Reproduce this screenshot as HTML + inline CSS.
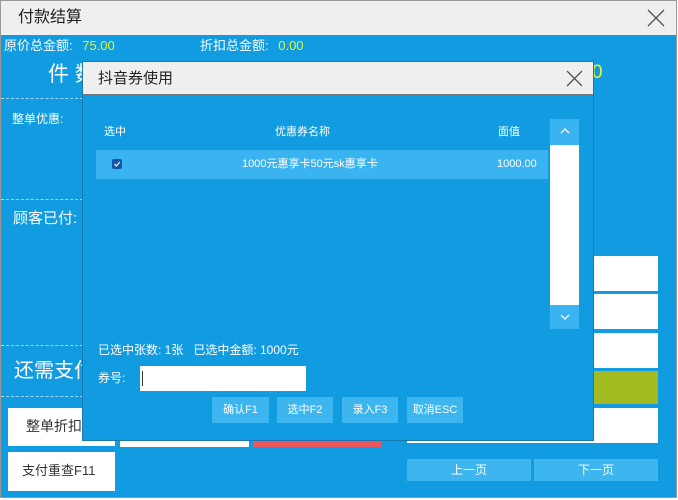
<!DOCTYPE html>
<html><head><meta charset="utf-8"><style>
*{margin:0;padding:0;box-sizing:border-box}
body{width:678px;height:500px;position:relative;overflow:hidden;background:#fff;font-family:"Liberation Sans","Noto Sans CJK SC",sans-serif;line-height:1.2}
.a{position:absolute}
.w{background:#fff}
.t{color:#fff;white-space:nowrap}
.lb{background:#3db5ee;color:#fff;font-size:11px;text-align:center}
</style></head><body>
<div class="a" style="left:0;top:0;width:677px;height:498px;border:1px solid #999;background:#119be0"></div>
<div class="a" style="left:1px;top:1px;width:675px;height:34px;background:#efefef"></div>
<div class="a" style="left:18px;top:8px;font-size:16px;color:#222">付款结算</div>
<svg class="a" style="left:647px;top:9px" width="18" height="18"><path d="M1 1L17 17M17 1L1 17" stroke="#555" stroke-width="1.3"/></svg>
<div class="a t" style="left:4px;top:38px;font-size:13px">原价总金额: <span style="color:#e3f53a;margin-left:6px">75.00</span></div>
<div class="a t" style="left:200px;top:38px;font-size:13px">折扣总金额: <span style="color:#e3f53a;margin-left:6px">0.00</span></div>
<div class="a t" style="left:48px;top:62px;font-size:21px">件 数</div>
<div class="a t" style="left:592px;top:62px;font-size:19px;color:#e3f53a">0</div>
<div class="a" style="left:1px;top:98px;width:82px;border-top:1px dashed #9fd6f5"></div>
<div class="a" style="left:1px;top:199px;width:82px;border-top:1px dashed #9fd6f5"></div>
<div class="a" style="left:1px;top:345px;width:82px;border-top:1px dashed #9fd6f5"></div>
<div class="a" style="left:1px;top:396px;width:82px;border-top:1px dashed #9fd6f5"></div>
<div class="a t" style="left:12px;top:112px;font-size:12px">整单优惠:</div>
<div class="a t" style="left:13px;top:210px;font-size:15px">顾客已付:</div>
<div class="a t" style="left:14px;top:359px;font-size:20px">还需支付</div>
<div class="a w" style="left:8px;top:408px;width:107px;height:38px;font-size:14px;color:#333;padding:10px 0 0 18px">整单折扣</div>
<div class="a w" style="left:120px;top:408px;width:129px;height:39px"></div>
<div class="a" style="left:253px;top:408px;width:129px;height:39px;background:#f0555d"></div>
<div class="a w" style="left:407px;top:408px;width:251px;height:35px"></div>
<div class="a w" style="left:594px;top:256px;width:64px;height:35px"></div>
<div class="a w" style="left:594px;top:294px;width:64px;height:35px"></div>
<div class="a w" style="left:594px;top:333px;width:64px;height:35px"></div>
<div class="a" style="left:594px;top:371px;width:64px;height:33px;background:#a3bb1f"></div>
<div class="a w" style="left:8px;top:452px;width:107px;height:39px;font-size:13px;color:#333;padding:11px 0 0 14px">支付重查F11</div>
<div class="a lb" style="left:407px;top:459px;width:124px;height:22px;line-height:22px;font-size:12px">上一页</div>
<div class="a lb" style="left:534px;top:459px;width:124px;height:22px;line-height:22px;font-size:12px">下一页</div>
<!-- dialog -->
<div class="a" style="left:82px;top:61px;width:512px;height:380px;border:1px solid #1878b0;background:#119be0"></div>
<div class="a" style="left:83px;top:62px;width:510px;height:33px;background:#efefef;border-bottom:1px solid #777"></div>
<div class="a" style="left:98px;top:70px;font-size:15px;color:#222">抖音券使用</div>
<svg class="a" style="left:566px;top:70px" width="17" height="17"><path d="M1 1L16 16M16 1L1 16" stroke="#555" stroke-width="1.3"/></svg>
<div class="a t" style="left:104px;top:126px;font-size:11px">选中</div>
<div class="a t" style="left:275px;top:126px;font-size:11px">优惠券名称</div>
<div class="a t" style="left:498px;top:126px;font-size:11px">面值</div>
<div class="a" style="left:96px;top:150px;width:452px;height:29px;background:#3ab4f0"></div>
<div class="a t" style="left:242px;top:150px;font-size:11px;line-height:29px">1000元惠享卡50元sk惠享卡</div>
<div class="a t" style="left:497px;top:150px;font-size:11px;line-height:29px">1000.00</div>
<div class="a" style="left:112px;top:159px;width:10px;height:10px;background:#1356a8;border-radius:2px"></div>
<svg class="a" style="left:112px;top:159px" width="10" height="10"><path d="M2.5 5L4.3 7L7.8 3" stroke="#fff" stroke-width="1.1" fill="none"/></svg>
<div class="a" style="left:550px;top:119px;width:29px;height:26px;background:#3ab4f0"></div>
<svg class="a" style="left:559px;top:127px" width="12" height="8"><path d="M2 6L6 2L10 6" stroke="#fff" stroke-width="1.3" fill="none"/></svg>
<div class="a w" style="left:550px;top:145px;width:29px;height:160px"></div>
<div class="a" style="left:550px;top:305px;width:29px;height:24px;background:#3ab4f0"></div>
<svg class="a" style="left:559px;top:313px" width="12" height="8"><path d="M2 2L6 6L10 2" stroke="#fff" stroke-width="1.3" fill="none"/></svg>
<div class="a t" style="left:98px;top:343px;font-size:12px">已选中张数: 1张&nbsp;&nbsp;&nbsp;已选中金额: 1000元</div>
<div class="a t" style="left:98px;top:371px;font-size:12px">券号:</div>
<div class="a w" style="left:140px;top:366px;width:166px;height:25px"></div>
<div class="a" style="left:142px;top:371px;width:1px;height:15px;background:#333"></div>
<div class="a lb" style="left:212px;top:397px;width:57px;height:26px;line-height:26px">确认F1</div>
<div class="a lb" style="left:277px;top:397px;width:56px;height:26px;line-height:26px">选中F2</div>
<div class="a lb" style="left:342px;top:397px;width:56px;height:26px;line-height:26px">录入F3</div>
<div class="a lb" style="left:407px;top:397px;width:56px;height:26px;line-height:26px">取消ESC</div>
</body></html>
